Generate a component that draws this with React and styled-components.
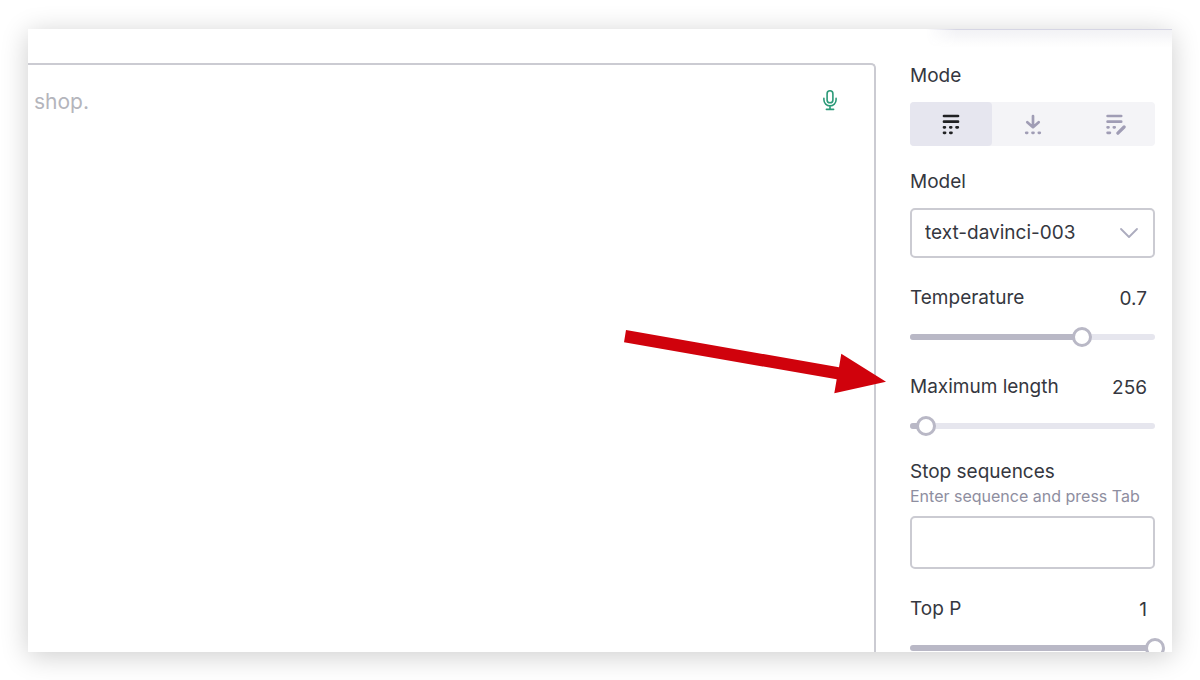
import React, { useState } from 'react'
import styled, { createGlobalStyle } from 'styled-components'

const GlobalStyle = createGlobalStyle`
    *, *::before, *::after {
        box-sizing: border-box;
    }
    body {
        margin: 0;
        background: #fff;
        color: #353740;
        font-family: Inter, 'Liberation Sans', sans-serif;
    }
    button, input, select, textarea {
        font-family: inherit;
        color: inherit;
        margin: 0;
    }
`

const Page = styled.div`
    display: flex;
    height: 100vh;
    padding: 29px 28px 28px;
`

const Frame = styled.main`
    display: flex;
    flex: 1;
    min-width: 0;
    overflow: hidden;
    background: #fff;
    box-shadow: 0 4px 26px rgba(0, 0, 0, 0.2);
`

const Editor = styled.section`
    display: flex;
    flex: 1;
    min-width: 0;
    align-items: flex-start;
    margin-top: 34px;
    padding: 22px 36px 0 6px;
    border: solid #cbcbd2;
    border-width: 2px 2px 0 0;
    border-top-right-radius: 5px;
`

const Prompt = styled.textarea`
    flex: 1;
    align-self: stretch;
    min-width: 0;
    padding: 0;
    border: 0;
    outline: 0;
    resize: none;
    background: none;
    font-size: 21px;
    line-height: 30px;

    &::placeholder {
        color: #b4b5bc;
        opacity: 1;
    }
`

const MicButton = styled.button`
    display: flex;
    padding: 2px 0 0;
    border: 0;
    background: none;
    color: #2b9a78;
    cursor: pointer;
`

const Sidebar = styled.aside`
    position: relative;
    width: 296px;
    flex-shrink: 0;
    padding: 35px 17px 0 34px;
`

const TopEdge = styled.div`
    position: absolute;
    top: 0;
    right: 0;
    width: 246px;
    height: 18px;
    background:
        linear-gradient(#d6d6e4, #d6d6e4) top / 100% 1px no-repeat,
        linear-gradient(rgba(80, 80, 120, 0.08), rgba(80, 80, 120, 0));
    mask-image: linear-gradient(90deg, transparent, #000 30px);
    pointer-events: none;
`

const Field = styled.div`
    position: relative;
    display: flex;
    flex-direction: column;
    gap: ${props => props.$gap || 14}px;
    margin-bottom: ${props => props.$after || 28}px;
`

const Label = styled.label`
    font-size: 19px;
    line-height: 24px;
`

const FieldHead = styled.div`
    display: flex;
    justify-content: space-between;
`

const ValueInput = styled.input`
    width: 60px;
    height: 24px;
    padding: 1px 8px 0 0;
    border: 0;
    outline: 0;
    background: none;
    font-size: 19px;
    text-align: right;
`

const Segments = styled.div`
    display: flex;
    height: 44px;
    border-radius: 4px;
    background: #f4f4f7;
`

const Segment = styled.button`
    display: flex;
    flex: 1;
    align-items: center;
    justify-content: center;
    padding: 0;
    border: 0;
    border-radius: 4px;
    background: ${props => props.$active ? '#e6e6ef' : 'none'};
    color: ${props => props.$active ? '#202123' : '#a09db5'};
    cursor: pointer;
`

const SelectBox = styled.div`
    display: grid;
    align-items: center;

    & > * {
        grid-area: 1 / 1;
    }
    & svg {
        justify-self: end;
        margin-right: 16px;
        pointer-events: none;
    }
`

const Select = styled.select`
    width: 100%;
    height: 50px;
    padding: 0 40px 2px 13px;
    appearance: none;
    border: 2px solid #cbcbd2;
    border-radius: 5px;
    background: #fff;
    font-size: 19px;
`

const TextInput = styled.input`
    width: 100%;
    height: 53px;
    padding: 0 13px;
    border: 2px solid #cbcbd2;
    border-radius: 5px;
    background: #fff;
    font-size: 19px;
`

const Hint = styled.span`
    color: #8e8ea0;
    font-size: 16px;
    line-height: 24px;
`

const SliderBox = styled.div`
    display: grid;
    align-items: center;

    & > * {
        grid-area: 1 / 1;
    }
`

const Rail = styled.div`
    height: 6px;
    border-radius: 3px;
    overflow: hidden;
    background: #e6e6ee;
`

const Fill = styled.div`
    height: 100%;
    background: #b9b8c6;
`

// wider than the rail so the thumb centre reaches both ends
const Range = styled.input`
    width: calc(100% + 20px);
    height: 20px;
    margin: 0 -10px;
    appearance: none;
    background: none;
    cursor: pointer;

    &::-webkit-slider-thumb {
        appearance: none;
        width: 20px;
        height: 20px;
        border: 3px solid #b9b8c6;
        border-radius: 50%;
        background: #fff;
    }
`

const Pointer = styled.svg`
    position: absolute;
    top: -47px;
    right: calc(100% + 22px);
    pointer-events: none;
`

const MicIcon = () => (
    <svg width="16" height="22" viewBox="0 0 16 22" fill="none" stroke="currentColor" strokeWidth="1.6" strokeLinecap="round" strokeLinejoin="round">
        <rect x="5.1" y="1.8" width="5.8" height="12" rx="2.9" />
        <path d="M1.9 9.4v1.4a6.1 6.1 0 0 0 12.2 0V9.4M8 17v3.4M4.4 20.4h7.2" />
    </svg>
)

const ModeIcon = ({ children }) => (
    <svg width="24" height="24" viewBox="0 0 24 24" fill="none" stroke="currentColor" strokeWidth="2.7" strokeLinecap="round" strokeLinejoin="round">
        {children}
    </svg>
)

const Chevron = () => (
    <svg width="20" height="12" viewBox="0 0 20 12" fill="none" stroke="#acacbe" strokeWidth="1.8" strokeLinecap="round" strokeLinejoin="round">
        <path d="M2 2l8 8 8-8" />
    </svg>
)

const modes = [
    { name: 'Complete', icon: <path d="M5 4h14M5 9.7h14M5 15.3h.9M11.3 15.3h.9M17.5 15.3h1.3M5 20.8h1.1M11.3 20.8h1.2" /> },
    { name: 'Insert', icon: <path d="M12 4v10.6M6.3 10.2l5.7 5 5.7-5M5.2 20.8h1M11.5 20.8h1M17.8 20.8h1" /> },
    {
        name: 'Edit',
        icon: (
            <>
                <path d="M5.6 4h13.6M5.6 9.7h13.6M5.6 15.3h.9M11.8 15.3h.9M5.6 20.8h2.3" />
                <path strokeWidth="3.2" d="M15.9 21.2l6.2-6.2" />
            </>
        ),
    },
]

const Slider = ({ id, label, max, step, initial, after, children }) => {
    const [value, setValue] = useState(initial)
    const percent = Math.min(100, (Number(value) || 0) / max * 100)

    return (
        <Field $gap={17} $after={after}>
            <FieldHead>
                <Label htmlFor={id}>{label}</Label>
                <ValueInput id={id} value={value} onChange={e => setValue(e.target.value)} />
            </FieldHead>
            <SliderBox>
                <Rail>
                    <Fill style={{ width: `${percent}%` }} />
                </Rail>
                <Range type='range' aria-label={label} min={0} max={max} step={step} value={value} onChange={e => setValue(e.target.value)} />
            </SliderBox>
            {children}
        </Field>
    )
}

const App = () => {
    const [mode, setMode] = useState('Complete')

    return (
        <>
            <GlobalStyle />
            <Page>
                <Frame>
                    <Editor>
                        <Prompt aria-label='Prompt' placeholder='shop.' />
                        <MicButton aria-label='Record'><MicIcon /></MicButton>
                    </Editor>
                    <Sidebar>
                        <TopEdge />
                        <Field $after={24}>
                            <Label as='span' id='mode'>Mode</Label>
                            <Segments role='group' aria-labelledby='mode'>
                                {modes.map(({ name, icon }) => (
                                    <Segment key={name} aria-label={name} aria-pressed={mode === name} $active={mode === name} onClick={() => setMode(name)}>
                                        <ModeIcon>{icon}</ModeIcon>
                                    </Segment>
                                ))}
                            </Segments>
                        </Field>
                        <Field>
                            <Label htmlFor='model'>Model</Label>
                            <SelectBox>
                                <Select id='model'>
                                    <option>text-davinci-003</option>
                                </Select>
                                <Chevron />
                            </SelectBox>
                        </Field>
                        <Slider id='temperature' label='Temperature' max={1} step={0.01} initial='0.7' />
                        <Slider id='length' label='Maximum length' max={4000} step={1} initial='256' after={24}>
                            <Pointer width="266" height="68" viewBox="0 0 266 68">
                                <path fill="#d0020c" d="M4 2L2 14.3 214.7 51.3 212.3 65.3 264 53.7 219.3 25.7 217 39.3z" />
                            </Pointer>
                        </Slider>
                        <Field $gap={8}>
                            <Label htmlFor='stop'>
                                Stop sequences
                                <br />
                                <Hint>Enter sequence and press Tab</Hint>
                            </Label>
                            <TextInput id='stop' />
                        </Field>
                        <Slider id='topp' label='Top P' max={1} step={0.01} initial='1' />
                    </Sidebar>
                </Frame>
            </Page>
        </>
    )
}

export default App
